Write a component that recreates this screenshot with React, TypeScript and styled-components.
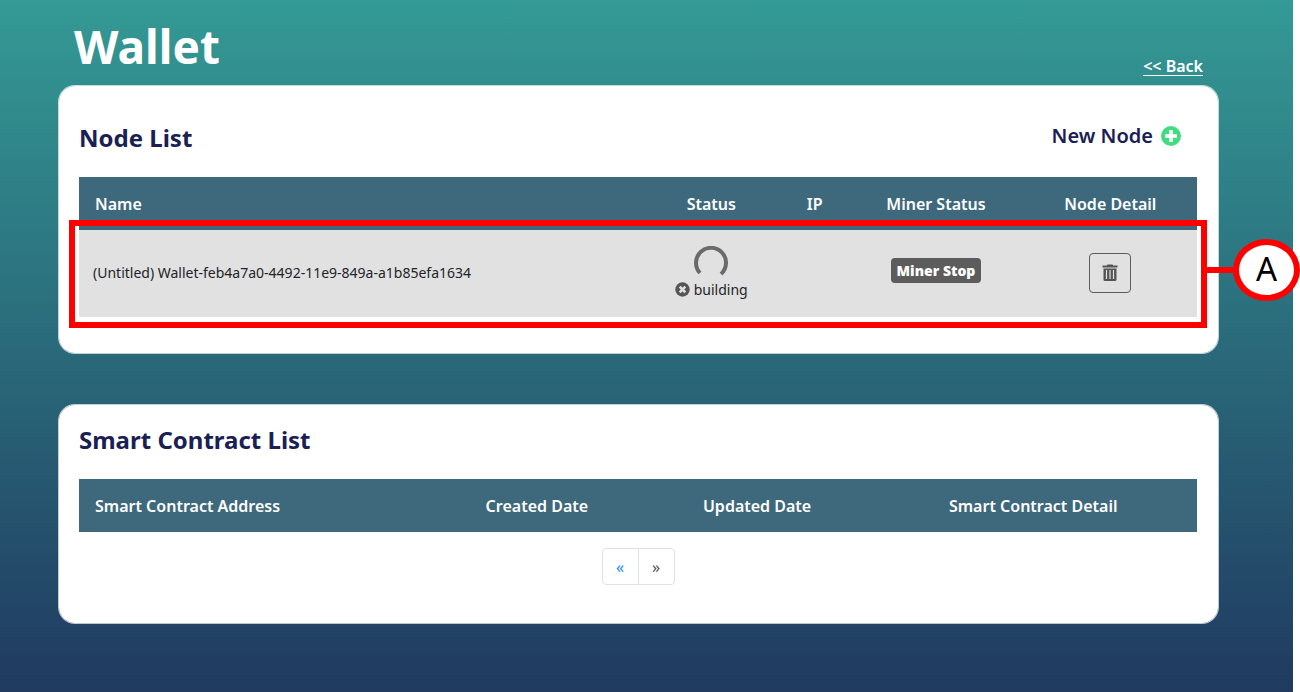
import React from "react";
import styled, { createGlobalStyle } from "styled-components";

const GlobalStyle = createGlobalStyle`
  *, *::before, *::after { box-sizing: border-box; }
  html { background: #fff; }
  body {
    margin: 0;
    font-family: "Noto Sans", sans-serif;
    font-size: 16px;
    line-height: 24px;
    color: #212529;
  }
`;

const Page = styled.div`
  min-height: 100vh;
  margin-right: 7px;
  padding: 16px 74px 68px 58px;
  background: linear-gradient(180deg, #349a95 0%, #203a60 100%);
`;

const PageHeader = styled.header`
  display: flex;
  justify-content: space-between;
  align-items: flex-end;
  height: 69px;
  padding: 0 16px;
  color: #fff;
`;

const PageTitle = styled.h1`
  margin: 0;
  align-self: flex-start;
  font-size: 46px;
  line-height: 60px;
  font-weight: 700;
`;

const BackLink = styled.a`
  padding-bottom: 7px;
  color: inherit;
  font-weight: 600;
  text-underline-offset: 3px;
`;

const Card = styled.section<{ $top: number }>`
  margin-bottom: 50px;
  padding: ${(p) => p.$top}px 21px 36px 20px;
  border: 1px solid rgba(255, 255, 255, 0.7);
  border-radius: 17px;
  background: #fff;
  background-clip: padding-box;
  &:last-child { margin-bottom: 0; }
`;

const CardHeader = styled.div`
  display: flex;
  justify-content: space-between;
  margin-bottom: 21px;
  padding-right: 16px;
  color: #1a2053;
`;

const CardTitle = styled.h2`
  margin: 0;
  font-size: 24px;
  line-height: 36px;
  font-weight: 700;
`;

const NewButton = styled.button`
  display: flex;
  align-items: center;
  gap: 8px;
  height: 32px;
  padding: 0;
  border: 0;
  background: none;
  color: inherit;
  font: inherit;
  font-size: 20px;
  font-weight: 600;
`;

const TableArea = styled.div`
  position: relative;
`;

const Table = styled.table`
  width: 100%;
  table-layout: fixed;
  border-collapse: collapse;
`;

const Col = styled.col<{ $width?: string }>`
  width: ${(p) => p.$width ?? "auto"};
`;

const HeadCell = styled.th<{ $left?: boolean }>`
  height: 53px;
  padding: 0 ${(p) => (p.$left ? 16 : 0)}px;
  background: #3e697c;
  color: #fff;
  font-weight: 600;
  text-align: ${(p) => (p.$left ? "left" : "center")};
`;

const Cell = styled.td<{ $left?: boolean }>`
  height: 87px;
  padding: 0 ${(p) => (p.$left ? 14 : 0)}px 2px;
  background: #e1e1e1;
  font-size: 14px;
  text-align: ${(p) => (p.$left ? "left" : "center")};
`;

const StatusStack = styled.div`
  display: flex;
  flex-direction: column;
  align-items: center;
`;

const StatusLine = styled.div`
  display: flex;
  align-items: center;
  gap: 4px;
  line-height: 20px;
`;

const Badge = styled.span`
  display: inline-block;
  margin-bottom: 4px;
  padding: 0 6px;
  border-radius: 4px;
  background: #5c5c5c;
  color: #fff;
  font-size: 14px;
  line-height: 25px;
  font-weight: 900;
`;

const IconButton = styled.button`
  display: inline-flex;
  align-items: center;
  justify-content: center;
  width: 42px;
  height: 40px;
  padding: 0;
  border: 1px solid #5c5c5c;
  border-radius: 4px;
  background: none;
  vertical-align: middle;
`;

const Highlight = styled.div`
  position: absolute;
  top: 43px;
  left: -10px;
  right: -10px;
  bottom: -11px;
  border: 6px solid #f00;
  pointer-events: none;
`;

const Callout = styled.div`
  position: absolute;
  top: 13px;
  left: 100%;
  display: flex;
  align-items: center;
`;

const CalloutLine = styled.span`
  width: 32px;
  height: 6px;
  background: #f00;
`;

const CalloutMark = styled.span`
  display: flex;
  align-items: center;
  justify-content: center;
  width: 67px;
  height: 62px;
  padding-bottom: 3px;
  border: 6px solid #f00;
  border-radius: 50%;
  background: #fff;
  color: #000;
  font-size: 33px;
`;

const Pager = styled.nav`
  display: flex;
  justify-content: center;
  padding: 16px 0 2px;
`;

const PagerButton = styled.button<{ $color: string }>`
  width: 37px;
  height: 37px;
  padding: 0;
  border: 1px solid #dee2e6;
  background: #fff;
  color: ${(p) => p.$color};
  font: inherit;
  &:first-child { border-radius: 4px 0 0 4px; }
  &:last-child { margin-left: -1px; border-radius: 0 4px 4px 0; }
`;

const PlusIcon = () => (
  <svg width="20" height="20" viewBox="0 0 20 20" aria-hidden="true">
    <circle cx="10" cy="10" r="10" fill="#41dc80" />
    <path d="M8.2 4h3.600v4.200H16v3.600h-4.200V16H8.200v-4.200H4V8.200h4.200z" fill="#fff" />
  </svg>
);

const Spinner = () => (
  <svg width="34" height="34" viewBox="0 0 34 34" aria-hidden="true">
    <path d="M6 27A15 15 0 1 1 27 28" fill="none" stroke="#6a6a6a" strokeWidth="4" />
  </svg>
);

const CancelIcon = () => (
  <svg width="15" height="15" viewBox="0 0 15 15" aria-hidden="true">
    <circle cx="7.5" cy="7.5" r="7.2" fill="#555" />
    <path d="M4.700 4.700l5.600 5.600M10.300 4.700l-5.600 5.600" stroke="#e1e1e1" strokeWidth="2.6" />
  </svg>
);

const TrashIcon = () => (
  <svg width="16" height="18" viewBox="0 0 16 18" aria-hidden="true">
    <path d="M5.500 .5h5l.8 1h4.200v2H.5v-2h4.200z" fill="#555" />
    <path d="M1.500 4.500h13v11a1.500 1.500 0 0 1-1.500 1.500H3A1.500 1.500 0 0 1 1.500 15.500z" fill="#555" />
    <path d="M4.500 6v9M8 6v9M11.500 6v9" stroke="#e1e1e1" strokeWidth="1.200" />
  </svg>
);

export default function App() {
  return (
    <>
      <GlobalStyle />
      <Page>
        <PageHeader>
          <PageTitle>Wallet</PageTitle>
          <BackLink href="#back">&lt;&lt; Back</BackLink>
        </PageHeader>
        <main>
          <Card $top={34}>
            <CardHeader>
              <CardTitle>Node List</CardTitle>
              <NewButton type="button">
                New Node <PlusIcon />
              </NewButton>
            </CardHeader>
            <TableArea>
              <Table>
                <colgroup>
                  <Col />
                  <Col $width="12.5%" />
                  <Col $width="6%" />
                  <Col $width="15.7%" />
                  <Col $width="15.5%" />
                </colgroup>
                <thead>
                  <tr>
                    <HeadCell $left>Name</HeadCell>
                    <HeadCell>Status</HeadCell>
                    <HeadCell>IP</HeadCell>
                    <HeadCell>Miner Status</HeadCell>
                    <HeadCell>Node Detail</HeadCell>
                  </tr>
                </thead>
                <tbody>
                  <tr>
                    <Cell $left>(Untitled) Wallet-feb4a7a0-4492-11e9-849a-a1b85efa1634</Cell>
                    <Cell>
                      <StatusStack>
                        <Spinner />
                        <StatusLine>
                          <CancelIcon /> building
                        </StatusLine>
                      </StatusStack>
                    </Cell>
                    <Cell />
                    <Cell>
                      <Badge>Miner Stop</Badge>
                    </Cell>
                    <Cell>
                      <IconButton type="button" aria-label="Delete node">
                        <TrashIcon />
                      </IconButton>
                    </Cell>
                  </tr>
                </tbody>
              </Table>
              <Highlight>
                <Callout>
                  <CalloutLine />
                  <CalloutMark>A</CalloutMark>
                </Callout>
              </Highlight>
            </TableArea>
          </Card>
          <Card $top={17}>
            <CardHeader>
              <CardTitle>Smart Contract List</CardTitle>
            </CardHeader>
            <Table>
              <colgroup>
                <Col />
                <Col $width="19.3%" />
                <Col $width="20.1%" />
                <Col $width="29.3%" />
              </colgroup>
              <thead>
                <tr>
                  <HeadCell $left>Smart Contract Address</HeadCell>
                  <HeadCell>Created Date</HeadCell>
                  <HeadCell>Updated Date</HeadCell>
                  <HeadCell>Smart Contract Detail</HeadCell>
                </tr>
              </thead>
            </Table>
            <Pager aria-label="Contract pages">
              <PagerButton type="button" aria-label="Previous" $color="#1e88f5">«</PagerButton>
              <PagerButton type="button" aria-label="Next" $color="#495057">»</PagerButton>
            </Pager>
          </Card>
        </main>
      </Page>
    </>
  );
}
